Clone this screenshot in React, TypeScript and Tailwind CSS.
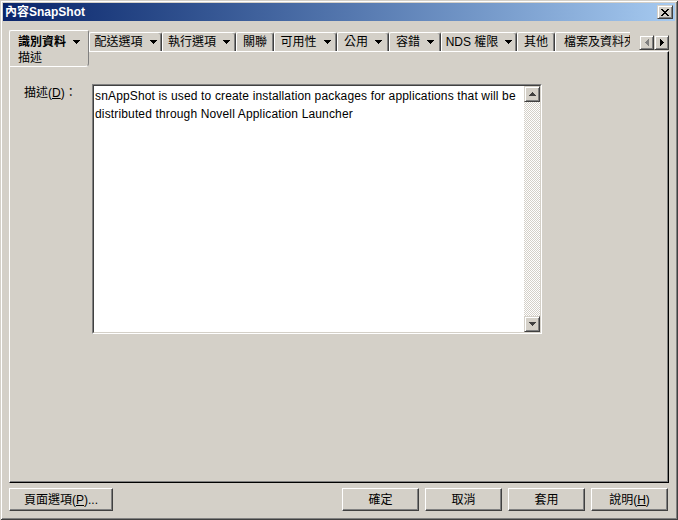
import React from "react";

const F = "font-['Liberation_Sans','Noto_Sans_CJK_TC',sans-serif]";

function DownArrow({ color = "#000" }: { color?: string }) {
  return (
    <svg width="7" height="4" viewBox="0 0 7 4" shapeRendering="crispEdges" className="block shrink-0">
      <rect x="0" y="0" width="7" height="1" fill={color} />
      <rect x="1" y="1" width="5" height="1" fill={color} />
      <rect x="2" y="2" width="3" height="1" fill={color} />
      <rect x="3" y="3" width="1" height="1" fill={color} />
    </svg>
  );
}

function UpArrow({ color = "#000" }: { color?: string }) {
  return (
    <svg width="7" height="4" viewBox="0 0 7 4" shapeRendering="crispEdges" className="block shrink-0">
      <rect x="3" y="0" width="1" height="1" fill={color} />
      <rect x="2" y="1" width="3" height="1" fill={color} />
      <rect x="1" y="2" width="5" height="1" fill={color} />
      <rect x="0" y="3" width="7" height="1" fill={color} />
    </svg>
  );
}

function LeftArrow({ color = "#000" }: { color?: string }) {
  return (
    <svg width="4" height="7" viewBox="0 0 4 7" shapeRendering="crispEdges" className="block shrink-0">
      <rect x="3" y="0" width="1" height="7" fill={color} />
      <rect x="2" y="1" width="1" height="5" fill={color} />
      <rect x="1" y="2" width="1" height="3" fill={color} />
      <rect x="0" y="3" width="1" height="1" fill={color} />
    </svg>
  );
}

function RightArrow({ color = "#000" }: { color?: string }) {
  return (
    <svg width="4" height="7" viewBox="0 0 4 7" shapeRendering="crispEdges" className="block shrink-0">
      <rect x="0" y="0" width="1" height="7" fill={color} />
      <rect x="1" y="1" width="1" height="5" fill={color} />
      <rect x="2" y="2" width="1" height="3" fill={color} />
      <rect x="3" y="3" width="1" height="1" fill={color} />
    </svg>
  );
}

function CloseX() {
  const rows = ["11000011", "01100110", "00111100", "00011000", "00111100", "01100110", "11000011"];
  return (
    <svg width="8" height="7" viewBox="0 0 8 7" shapeRendering="crispEdges" className="block">
      {rows.map((r, y) =>
        r.split("").map((c, x) => (c === "1" ? <rect key={`${x}-${y}`} x={x} y={y} width="1" height="1" fill="#000" /> : null))
      )}
    </svg>
  );
}

function Tab({ label, w, arrow }: { label: string; w: string; arrow?: boolean }) {
  return (
    <div
      className={`${w} h-[19px] mt-[2px] shrink-0 flex items-center justify-center gap-[7px] border-t border-l border-white rounded-tl-[2px] rounded-tr-[3px] shadow-[inset_-1px_0_0_#808080,inset_-2px_0_0_#d4d0c8] border-r border-r-[#404040] text-[12px] leading-[14px] text-black whitespace-nowrap`}
    >
      <span>{label}</span>
      {arrow && <DownArrow />}
    </div>
  );
}

function Btn({ w, children }: { w: string; children: React.ReactNode }) {
  return (
    <div
      className={`${w} h-[23px] shrink-0 flex items-center justify-center border border-t-white border-l-white border-r-[#404040] border-b-[#404040] shadow-[inset_-1px_-1px_0_#808080] text-[12px] leading-[14px] text-black`}
    >
      {children}
    </div>
  );
}

const raisedSmall =
  "border border-t-[#d4d0c8] border-l-[#d4d0c8] border-r-[#404040] border-b-[#404040] shadow-[inset_1px_1px_0_#ffffff,inset_-1px_-1px_0_#808080] bg-[#d4d0c8]";

export default function App() {
  return (
    <div
      className={`${F} w-[678px] h-[520px] bg-[#d4d0c8] flex flex-col shadow-[inset_1px_1px_0_#d4d0c8,inset_-1px_-1px_0_#404040,inset_2px_2px_0_#ffffff,inset_-2px_-2px_0_#808080] overflow-hidden select-none`}
    >
      {/* Title bar */}
      <div className="mx-[3px] mt-[3px] h-[18px] shrink-0 flex items-center bg-linear-to-r from-[#0a246a] to-[#a6caf0] pl-[2px] pr-[2px]">
        <span className="text-white font-bold text-[12px] leading-[14px]">內容SnapShot</span>
        <div className={`ml-auto w-[16px] h-[14px] flex items-center justify-center ${raisedSmall}`}>
          <CloseX />
        </div>
      </div>

      {/* Body */}
      <div className="flex flex-col pl-[9px] pr-[9px] mt-[9px] flex-1">
        {/* Tab strip */}
        <div className="flex items-start h-[37px] mb-[-16px]">
          <div className="relative z-10 w-[80px] h-[37px] shrink-0 bg-[#d4d0c8] border-t border-l border-b border-white border-r border-r-[#808080] rounded-tl-[2px] rounded-tr-[2px] rounded-br-[4px] pl-[8px] pt-[3px] text-[12px] leading-[16px] text-black">
            <div className="flex items-center gap-[7px]">
              <span className="font-bold">識別資料</span>
              <DownArrow />
            </div>
            <div>描述</div>
          </div>
          <div className="flex items-start w-[549px] overflow-hidden">
            <Tab label="配送選項" w="w-[73px]" arrow />
            <Tab label="執行選項" w="w-[74px]" arrow />
            <Tab label="關聯" w="w-[38px]" />
            <Tab label="可用性" w="w-[63px]" arrow />
            <Tab label="公用" w="w-[52px]" arrow />
            <Tab label="容錯" w="w-[52px]" arrow />
            <Tab label="NDS 權限" w="w-[76px]" arrow />
            <Tab label="其他" w="w-[38px]" />
            <div className="w-[83px] h-[19px] mt-[2px] shrink-0 flex items-center pl-[8px] border-t border-l border-white rounded-tl-[2px] text-[12px] leading-[14px] text-black whitespace-nowrap">
              檔案及資料夾
            </div>
          </div>
          <div className="ml-[9px] mt-[5px] flex">
            <div className={`w-[15px] h-[15px] flex items-center justify-center ${raisedSmall}`}>
              <LeftArrow color="#808080" />
            </div>
            <div className={`w-[15px] h-[15px] flex items-center justify-center ${raisedSmall}`}>
              <RightArrow />
            </div>
          </div>
        </div>

        {/* Panel */}
        <div className="w-[660px] h-[432px] shrink-0 border-t border-l border-white border-r border-b border-r-black border-b-black shadow-[inset_-1px_-1px_0_#808080] flex items-start pl-[14px] pt-[32px]">
          <div className="w-[68px] shrink-0 pt-[2px] text-[12px] leading-[14px] text-black whitespace-nowrap">
            描述(<span className="underline">D</span>)：
          </div>
          <div className="w-[450px] h-[250px] shrink-0 border border-t-[#808080] border-l-[#808080] border-r-white border-b-white">
            <div className="w-full h-full border border-t-[#404040] border-l-[#404040] border-r-[#d4d0c8] border-b-[#d4d0c8] bg-white flex">
              <div className="flex-1 pl-[1px] pt-[1px] text-[12px] leading-[18px] tracking-[0.15px] text-black whitespace-nowrap">
                <div>snAppShot is used to create installation packages for applications that will be</div>
                <div>distributed through Novell Application Launcher</div>
              </div>
              <div className="w-[16px] flex flex-col shrink-0">
                <div className={`w-[16px] h-[16px] flex items-center justify-center ${raisedSmall}`}>
                  <UpArrow color="#404040" />
                </div>
                <div className="flex-1 bg-[repeating-conic-gradient(#ffffff_0%_25%,#d4d0c8_0%_50%)] bg-size-[2px_2px]" />
                <div className={`w-[16px] h-[16px] flex items-center justify-center ${raisedSmall}`}>
                  <DownArrow color="#404040" />
                </div>
              </div>
            </div>
          </div>
        </div>

        {/* Buttons */}
        <div className="flex mt-[5px] pr-[1px]">
          <Btn w="w-[104px]">
            頁面選項(<span className="underline">P</span>)...
          </Btn>
          <div className="ml-auto flex gap-[6px]">
            <Btn w="w-[77px]">確定</Btn>
            <Btn w="w-[77px]">取消</Btn>
            <Btn w="w-[77px]">套用</Btn>
            <Btn w="w-[77px]">
              說明(<span className="underline">H</span>)
            </Btn>
          </div>
        </div>
      </div>
    </div>
  );
}
